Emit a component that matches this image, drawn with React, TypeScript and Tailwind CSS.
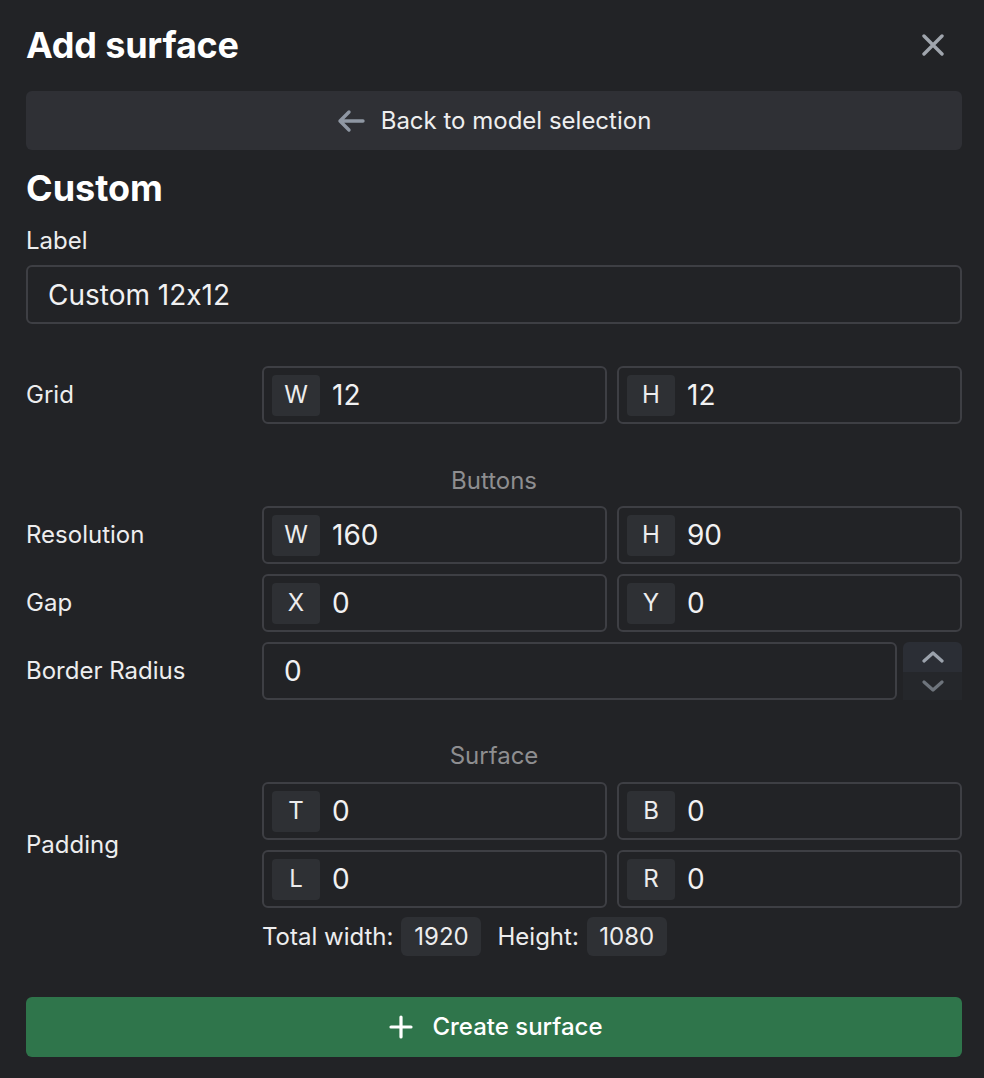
import type React from "react"

function Prefixed({ prefix, value }: { prefix: string; value: string }) {
  return (
    <div className="flex h-[58px] flex-1 items-center rounded-[6px] border-2 border-[#3e3f44] pl-[8px]">
      <span className="flex h-[41px] w-[48px] items-center justify-center rounded-[4px] bg-[#2e3034] text-[24px] text-[#ececed]">
        {prefix}
      </span>
      <span className="ml-[12px] text-[28px] text-[#f1f1f2]">{value}</span>
    </div>
  )
}

function Row({ label, children }: { label: string; children: React.ReactNode }) {
  return (
    <div className="flex items-center">
      <div className="w-[236px] shrink-0 text-[24px] text-[#ededee]">{label}</div>
      <div className="flex flex-1 gap-[10px]">{children}</div>
    </div>
  )
}

export default function App() {
  return (
    <div className="h-[1078px] w-[984px] bg-[#222326] pl-[26px] pr-[22px] font-['Inter','Noto_Sans',sans-serif] text-[#f1f1f2] [font-feature-settings:'calt'_0]">
      <div className="flex h-[91px] items-center justify-between pb-[2px]">
        <h1 className="text-[36px] font-bold leading-[44px] tracking-[-0.2px] text-white">Add surface</h1>
        <svg className="mr-[18px] h-[22px] w-[22px] text-[#a0a5ad]" viewBox="0 0 22 22" fill="none" stroke="currentColor" strokeWidth="3.4" strokeLinecap="round">
          <path d="M2 2L20 20M20 2L2 20" />
        </svg>
      </div>

      <button className="flex h-[59px] w-full items-center justify-center gap-[16px] rounded-[6px] bg-[#2f3035] text-[24px] text-[#eeeeef]">
        <svg className="h-[24px] w-[28px] text-[#8f97a3]" viewBox="0 0 28 24" fill="none" stroke="currentColor" strokeWidth="3.4" strokeLinecap="round" strokeLinejoin="round">
          <path d="M26 12H3M12 3L3 12L12 21" />
        </svg>
        <span>Back to model selection</span>
      </button>

      <h2 className="mt-[18px] text-[36px] font-bold leading-[40px] text-white">Custom</h2>
      <div className="mt-[19px] text-[24px] leading-[28px] text-[#ededee]">Label</div>
      <div className="mt-[10px] flex h-[59px] items-center rounded-[6px] border-2 border-[#3e3f44] px-[20px] text-[28px] text-[#f1f1f2]">
        Custom 12x12
      </div>

      <div className="mt-[42px]">
        <Row label="Grid">
          <Prefixed prefix="W" value="12" />
          <Prefixed prefix="H" value="12" />
        </Row>
      </div>

      <div className="mt-[43px] text-center text-[24px] leading-[28px] text-[#8e8e90]">Buttons</div>

      <div className="mt-[11px] flex flex-col gap-[10px]">
        <Row label="Resolution">
          <Prefixed prefix="W" value="160" />
          <Prefixed prefix="H" value="90" />
        </Row>
        <Row label="Gap">
          <Prefixed prefix="X" value="0" />
          <Prefixed prefix="Y" value="0" />
        </Row>
        <Row label="Border Radius">
          <div className="flex flex-1 gap-[6px]">
            <div className="flex h-[58px] flex-1 items-center rounded-[6px] border-2 border-[#3e3f44] px-[20px] text-[28px]">
              0
            </div>
            <div className="flex w-[59px] flex-col">
              <div className="flex h-[30px] items-center justify-center rounded-t-[6px] bg-[#2b2e35]">
                <svg className="h-[12px] w-[22px] text-[#9ba2ac]" viewBox="0 0 22 12" fill="none" stroke="currentColor" strokeWidth="3.2" strokeLinecap="round" strokeLinejoin="round">
                  <path d="M2 10L11 2L20 10" />
                </svg>
              </div>
              <div className="flex h-[28px] items-center justify-center bg-[#25272b]">
                <svg className="h-[12px] w-[22px] text-[#6e747c]" viewBox="0 0 22 12" fill="none" stroke="currentColor" strokeWidth="3.2" strokeLinecap="round" strokeLinejoin="round">
                  <path d="M2 2L11 10L20 2" />
                </svg>
              </div>
            </div>
          </div>
        </Row>
      </div>

      <div className="mt-[42px] text-center text-[24px] leading-[28px] text-[#8e8e90]">Surface</div>

      <div className="mt-[12px] flex items-center">
        <div className="w-[236px] shrink-0 text-[24px] text-[#ededee]">Padding</div>
        <div className="flex flex-1 flex-col gap-[10px]">
          <div className="flex gap-[10px]">
            <Prefixed prefix="T" value="0" />
            <Prefixed prefix="B" value="0" />
          </div>
          <div className="flex gap-[10px]">
            <Prefixed prefix="L" value="0" />
            <Prefixed prefix="R" value="0" />
          </div>
        </div>
      </div>

      <div className="ml-[236px] mt-[9px] flex items-center text-[24px] text-[#ededee]">
        <span>Total width:</span>
        <span className="ml-[8px] flex h-[39px] w-[80px] items-center justify-center rounded-[6px] bg-[#2e3034]">1920</span>
        <span className="ml-[16px]">Height:</span>
        <span className="ml-[8px] flex h-[39px] w-[80px] items-center justify-center rounded-[6px] bg-[#2e3034]">1080</span>
      </div>

      <button className="mt-[41px] flex h-[60px] w-full items-center justify-center gap-[19px] rounded-[6px] bg-[#2f754b] text-[24px] font-medium text-white">
        <svg className="ml-[4px] h-[24px] w-[24px]" viewBox="0 0 24 24" fill="none" stroke="currentColor" strokeWidth="3.2" strokeLinecap="round">
          <path d="M12 2V22M2 12H22" />
        </svg>
        <span>Create surface</span>
      </button>
    </div>
  )
}
